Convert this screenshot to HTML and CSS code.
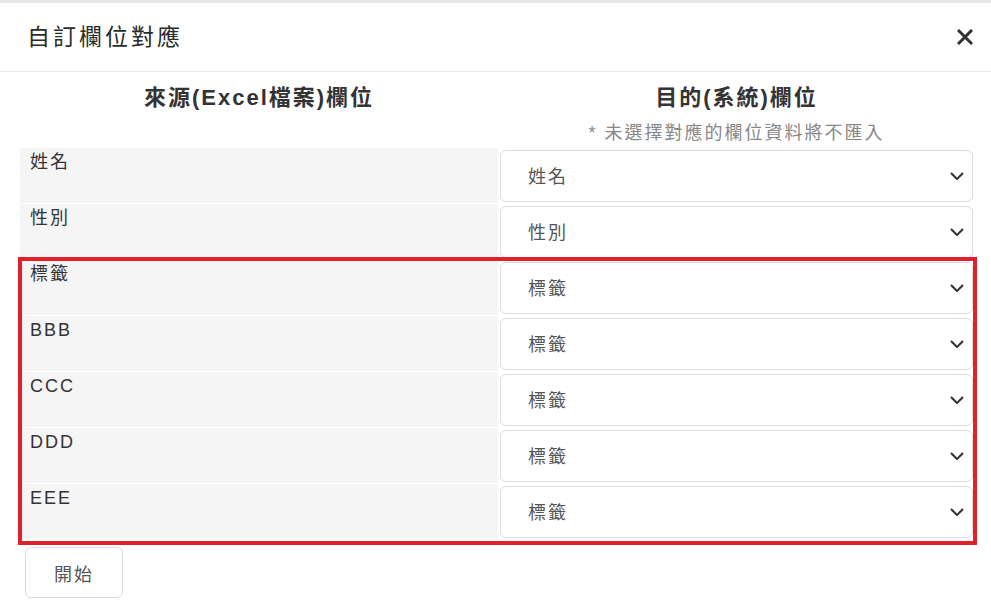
FILE: index.html
```html
<!DOCTYPE html>
<html lang="zh-Hant">
<head>
  <meta charset="UTF-8">
  <meta name="viewport" content="width=device-width, initial-scale=1.0">
  <title>自訂欄位對應</title>
  <link rel="stylesheet" href="styles.css">
</head>
<body>
  <div class="top-strip"></div>

  <div class="modal">
    <div class="modal-header">
      <h2 class="modal-title">自訂欄位對應</h2>
      <button class="close-btn" aria-label="close">
        <svg width="16" height="16" viewBox="0 0 16 16">
          <path d="M2 2 L14 14 M14 2 L2 14" stroke="#333" stroke-width="3" stroke-linecap="square"/>
        </svg>
      </button>
    </div>

    <div class="modal-body">
      <div class="col-heads">
        <div class="col-head">來源(Excel檔案)欄位</div>
        <div class="col-head">目的(系統)欄位</div>
      </div>
      <div class="col-heads">
        <div></div>
        <div class="note">* 未選擇對應的欄位資料將不匯入</div>
      </div>

      <div class="map-wrap">
        <div class="map-rows">
          <div class="src-cell">姓名</div>
          <div class="dst-cell"><div class="select-box"><span>姓名</span><svg width="14" height="8" viewBox="0 0 14 8"><path d="M1 1 L7 7 L13 1" fill="none" stroke="#333" stroke-width="2"/></svg></div></div>

          <div class="src-cell">性別</div>
          <div class="dst-cell"><div class="select-box"><span>性別</span><svg width="14" height="8" viewBox="0 0 14 8"><path d="M1 1 L7 7 L13 1" fill="none" stroke="#333" stroke-width="2"/></svg></div></div>

          <div class="src-cell">標籤</div>
          <div class="dst-cell"><div class="select-box"><span>標籤</span><svg width="14" height="8" viewBox="0 0 14 8"><path d="M1 1 L7 7 L13 1" fill="none" stroke="#333" stroke-width="2"/></svg></div></div>

          <div class="src-cell">BBB</div>
          <div class="dst-cell"><div class="select-box"><span>標籤</span><svg width="14" height="8" viewBox="0 0 14 8"><path d="M1 1 L7 7 L13 1" fill="none" stroke="#333" stroke-width="2"/></svg></div></div>

          <div class="src-cell">CCC</div>
          <div class="dst-cell"><div class="select-box"><span>標籤</span><svg width="14" height="8" viewBox="0 0 14 8"><path d="M1 1 L7 7 L13 1" fill="none" stroke="#333" stroke-width="2"/></svg></div></div>

          <div class="src-cell">DDD</div>
          <div class="dst-cell"><div class="select-box"><span>標籤</span><svg width="14" height="8" viewBox="0 0 14 8"><path d="M1 1 L7 7 L13 1" fill="none" stroke="#333" stroke-width="2"/></svg></div></div>

          <div class="src-cell">EEE</div>
          <div class="dst-cell"><div class="select-box"><span>標籤</span><svg width="14" height="8" viewBox="0 0 14 8"><path d="M1 1 L7 7 L13 1" fill="none" stroke="#333" stroke-width="2"/></svg></div></div>
        </div>
        <!-- highlight box around the custom rows -->
        <div class="highlight"></div>
      </div>

      <button class="start-btn">開始</button>
    </div>
  </div>
</body>
</html>
```

FILE: styles.css
```css
/* General Styles */
body {
  margin: 0;
  font-family: "Liberation Sans", "Noto Sans CJK TC", sans-serif;
  color: #333;
  background: #fff;
}

.top-strip {
  height: 3px;
  background: #e6e6e6;
}

/* Header */
.modal-header {
  box-sizing: border-box;
  height: 69px;
  display: flex;
  align-items: center;
  justify-content: space-between;
  padding: 0 18px 0 27px;
  border-bottom: 1px solid #e9e9e9;
}

.modal-title {
  margin: 0;
  font-size: 23px;
  font-weight: normal;
  letter-spacing: 3px;
  line-height: 30px;
  color: #2b2b2b;
}

.close-btn {
  border: none;
  background: none;
  padding: 0;
  width: 16px;
  height: 16px;
  display: flex;
  cursor: pointer;
}

/* Body */
.modal-body {
  padding: 0 18px 0 20px;
}

.col-heads {
  display: grid;
  grid-template-columns: 478px 1fr;
  column-gap: 2px;
}

.col-head {
  padding-top: 11px;
  line-height: 30px;
  font-size: 22px;
  font-weight: bold;
  letter-spacing: 2px;
  text-align: center;
  color: #333;
}

.note {
  margin-top: 8px;
  margin-bottom: 3px;
  line-height: 24px;
  font-size: 18px;
  letter-spacing: 2px;
  text-align: center;
  color: #888;
}

.map-wrap {
  position: relative;
}

.map-rows {
  display: grid;
  grid-template-columns: 478px 1fr;
  grid-auto-rows: 55px;
  column-gap: 2px;
  row-gap: 1px;
}

.src-cell {
  background: #f5f5f5;
  padding: 2px 10px 0;
  font-size: 18px;
  line-height: 24px;
  letter-spacing: 2px;
  color: #333;
}

.dst-cell {
  padding-top: 2px;
}

.select-box {
  box-sizing: border-box;
  height: 52px;
  display: flex;
  align-items: center;
  justify-content: space-between;
  padding: 0 8px 2px 27px;
  border: 1px solid #dcdcdc;
  border-radius: 6px;
  background: #fff;
  font-size: 18px;
  letter-spacing: 2px;
  color: #555;
}

.select-box svg {
  margin-top: 2px;
}

.highlight {
  position: absolute;
  left: -2px;
  top: 109px;
  width: 959px;
  height: 288px;
  box-sizing: border-box;
  border: 4px solid #e0202b;
  pointer-events: none;
}

.start-btn {
  margin: 8px 0 0 5px;
  height: 51px;
  width: 98px;
  border: 1px solid #dcdcdc;
  border-radius: 6px;
  background: #fff;
  font-family: inherit;
  font-size: 18px;
  letter-spacing: 2px;
  color: #555;
  cursor: pointer;
}
```
